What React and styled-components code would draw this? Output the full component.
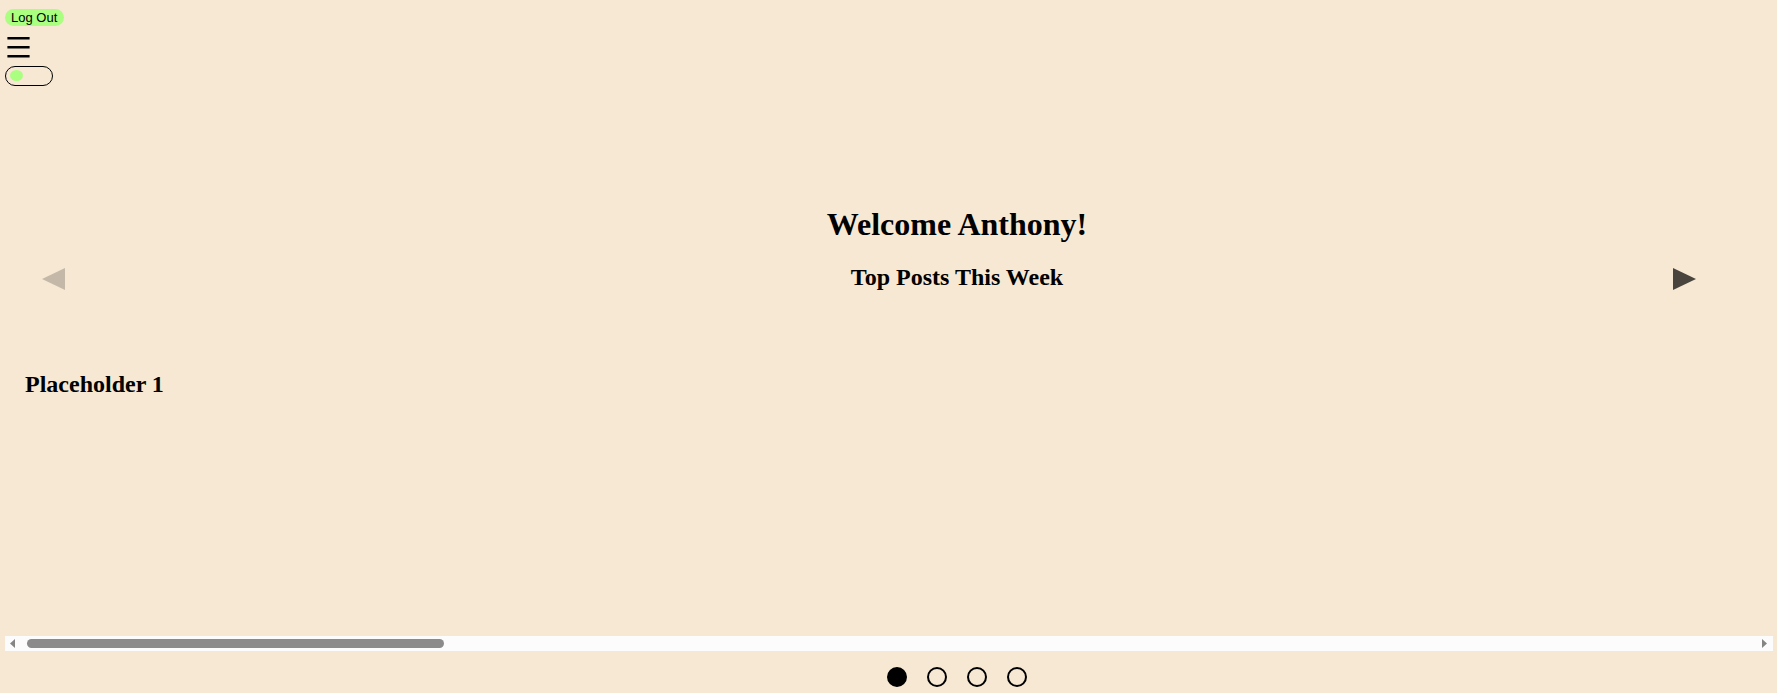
import React, { useState } from "react";
import styled, { createGlobalStyle } from "styled-components";

const GlobalStyle = createGlobalStyle`
  *, *::before, *::after { box-sizing: border-box; }
  body {
    margin: 0;
    background: #f7e8d3;
    color: #000;
    font-family: "Liberation Serif", "Times New Roman", serif;
  }
  h1, h2, h3 { margin: 0; font-weight: bold; }
`;

const Page = styled.div`
  padding: 9px 4px 5px 5px;
`;

const Controls = styled.header`
  display: flex;
  flex-direction: column;
  align-items: flex-start;
`;

const LogOutButton = styled.button`
  height: 17px;
  padding: 0 7px 0 6px;
  border: 0;
  border-radius: 9px;
  background: #aaff80;
  color: #000;
  font: 13px/17px "Liberation Sans", Arial, sans-serif;
  cursor: pointer;
`;

const MenuButton = styled.button`
  display: flex;
  margin: 8px 0 5px;
  padding: 3px 2px;
  border: 0;
  background: none;
  cursor: pointer;
`;

const Toggle = styled.input`
  appearance: none;
  display: flex;
  align-items: center;
  width: 48px;
  height: 20px;
  margin: 0;
  padding: 0 4px 1px;
  border: 1px solid #000;
  border-radius: 10px;
  cursor: pointer;

  &::before {
    content: "";
    width: 13px;
    height: 11px;
    border-radius: 50%;
    background: #aaff80;
  }
  &:checked { justify-content: flex-end; }
`;

const Hero = styled.section`
  display: flex;
  align-items: flex-end;
  justify-content: space-between;
  margin-top: 120px;
  padding: 0 74px 0 34px;
`;

const ArrowButton = styled.button`
  display: flex;
  padding: 3px 3px 1px;
  border: 0;
  background: none;
  color: #000;
  opacity: 0.7;
  cursor: pointer;

  &:disabled {
    opacity: 0.2;
    cursor: default;
  }
`;

const Titles = styled.div`
  flex: 1;
  display: flex;
  flex-direction: column;
  gap: 21px;
  padding-left: 176px;
  text-align: center;
`;

const Welcome = styled.h1`
  font-size: 32px;
  line-height: 36px;
`;

const Subtitle = styled.h2`
  font-size: 24px;
  line-height: 28px;
`;

const Slide = styled.section`
  min-height: 345px;
  padding: 79px 20px 0;
`;

const SlideTitle = styled.h3`
  font-size: 24px;
  line-height: 28px;
`;

const ScrollBar = styled.div`
  display: flex;
  align-items: center;
  justify-content: space-between;
  height: 15px;
  padding: 0 6px 0 5px;
  background: #fcfcfc;
`;

const StepButton = styled.button`
  display: flex;
  padding: 0;
  border: 0;
  background: none;
`;

const Track = styled.div`
  flex: 1;
  margin: 0 12px;
`;

const Thumb = styled.div`
  height: 9px;
  border-radius: 5px;
  background: #8b8b8b;
`;

const Dots = styled.nav`
  display: flex;
  justify-content: center;
  gap: 20px;
  margin-top: 16px;
  padding-left: 136px;
`;

const Dot = styled.button`
  width: 20px;
  height: 20px;
  padding: 0;
  border: 2px solid #000;
  border-radius: 50%;
  background: ${({ $active }) => ($active ? "#000" : "transparent")};
  cursor: pointer;
`;

const slides = ["Placeholder 1", "Placeholder 2", "Placeholder 3", "Placeholder 4"];

function Triangle({ left }) {
  const points = left ? "23,0 23,22 0,11" : "0,0 0,22 23,11";
  return (
    <svg width="23" height="22" viewBox="0 0 23 22" aria-hidden="true">
      <polygon points={points} fill="currentColor" />
    </svg>
  );
}

function StepIcon({ left }) {
  return (
    <svg width="5" height="9" viewBox="0 0 5 9" aria-hidden="true">
      <polygon points={left ? "5,0 5,9 0,4.5" : "0,0 0,9 5,4.5"} fill="#858585" />
    </svg>
  );
}

export default function App() {
  const [current, setCurrent] = useState(0);
  const last = slides.length - 1;
  const previous = () => setCurrent(Math.max(0, current - 1));
  const next = () => setCurrent(Math.min(last, current + 1));
  const share = 96.8 / slides.length;

  return (
    <>
      <GlobalStyle />
      <Page>
        <Controls>
          <LogOutButton type="button">Log Out</LogOutButton>
          <MenuButton type="button" aria-label="Menu">
            <svg width="23" height="21" viewBox="0 0 23 21" aria-hidden="true">
              <path d="M.4 0h22.2v2.6H.4zM.4 9h22.2v2.6H.4zM.4 18h22.2v2.6H.4z" />
            </svg>
          </MenuButton>
          <Toggle type="checkbox" role="switch" aria-label="Dark theme" />
        </Controls>
        <main>
          <Hero>
            <ArrowButton type="button" aria-label="Previous" disabled={current === 0} onClick={previous}>
              <Triangle left />
            </ArrowButton>
            <Titles>
              <Welcome>Welcome Anthony!</Welcome>
              <Subtitle>Top Posts This Week</Subtitle>
            </Titles>
            <ArrowButton type="button" aria-label="Next" disabled={current === last} onClick={next}>
              <Triangle />
            </ArrowButton>
          </Hero>
          <Slide>
            <SlideTitle>{slides[current]}</SlideTitle>
          </Slide>
          <ScrollBar>
            <StepButton type="button" aria-label="Scroll left" onClick={previous}>
              <StepIcon left />
            </StepButton>
            <Track>
              <Thumb style={{ width: `${share}%`, marginLeft: `${current * share}%` }} />
            </Track>
            <StepButton type="button" aria-label="Scroll right" onClick={next}>
              <StepIcon />
            </StepButton>
          </ScrollBar>
          <Dots aria-label="Slides">
            {slides.map((name, index) => (
              <Dot
                key={name}
                type="button"
                aria-label={name}
                $active={index === current}
                onClick={() => setCurrent(index)}
              />
            ))}
          </Dots>
        </main>
      </Page>
    </>
  );
}
